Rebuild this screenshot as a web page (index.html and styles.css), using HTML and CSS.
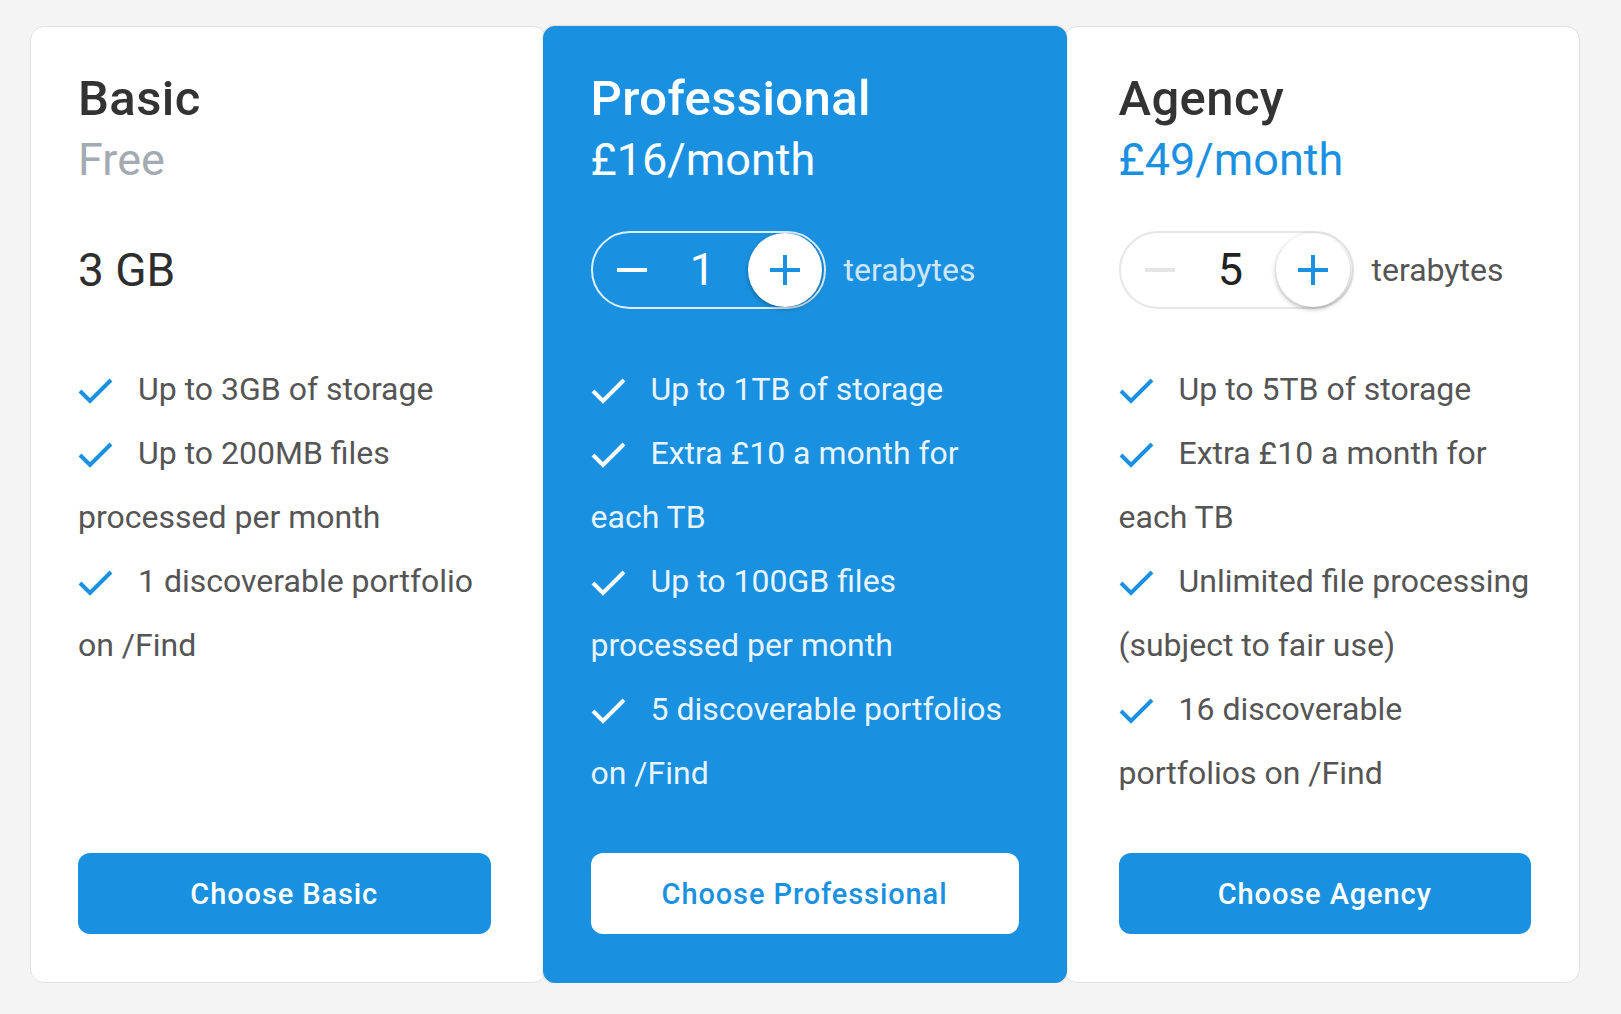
FILE: index.html
```html
<!DOCTYPE html>
<html lang="en">
<head>
<meta charset="utf-8">
<title>Plans</title>
<link rel="stylesheet" href="styles.css">
</head>
<body>
<div class="plans">
  <section class="card card-basic">
    <h2 class="title">Basic</h2>
    <div class="price price-free">Free</div>
    <div class="row"><span class="size">3 GB</span></div>
    <ul class="features">
      <li><svg class="check" viewBox="0 0 35 26"><polyline points="2,13 12,23 33,2"/></svg>Up to 3GB of storage</li>
      <li><svg class="check" viewBox="0 0 35 26"><polyline points="2,13 12,23 33,2"/></svg>Up to 200MB files processed per month</li>
      <li><svg class="check" viewBox="0 0 35 26"><polyline points="2,13 12,23 33,2"/></svg>1 discoverable portfolio on /Find</li>
    </ul>
    <button class="choose">Choose Basic</button>
  </section>

  <section class="card card-pro">
    <h2 class="title">Professional</h2>
    <div class="price">£16/month</div>
    <div class="row">
      <div class="stepper">
        <span class="minus"><span class="bar"></span></span>
        <span class="qty">1</span>
        <span class="plus"><span class="bar"></span><span class="bar bar-v"></span></span>
      </div>
      <span class="unit">terabytes</span>
    </div>
    <ul class="features">
      <li><svg class="check" viewBox="0 0 35 26"><polyline points="2,13 12,23 33,2"/></svg>Up to 1TB of storage</li>
      <li><svg class="check" viewBox="0 0 35 26"><polyline points="2,13 12,23 33,2"/></svg>Extra £10 a month for each TB</li>
      <li><svg class="check" viewBox="0 0 35 26"><polyline points="2,13 12,23 33,2"/></svg>Up to 100GB files processed per month</li>
      <li><svg class="check" viewBox="0 0 35 26"><polyline points="2,13 12,23 33,2"/></svg>5 discoverable portfolios on /Find</li>
    </ul>
    <button class="choose">Choose Professional</button>
  </section>

  <section class="card card-agency">
    <h2 class="title">Agency</h2>
    <div class="price price-blue">£49/month</div>
    <div class="row">
      <div class="stepper">
        <span class="minus minus-off"><span class="bar"></span></span>
        <span class="qty">5</span>
        <span class="plus"><span class="bar"></span><span class="bar bar-v"></span></span>
      </div>
      <span class="unit">terabytes</span>
    </div>
    <ul class="features">
      <li><svg class="check" viewBox="0 0 35 26"><polyline points="2,13 12,23 33,2"/></svg>Up to 5TB of storage</li>
      <li><svg class="check" viewBox="0 0 35 26"><polyline points="2,13 12,23 33,2"/></svg>Extra £10 a month for each TB</li>
      <li><svg class="check" viewBox="0 0 35 26"><polyline points="2,13 12,23 33,2"/></svg>Unlimited file processing (subject to fair use)</li>
      <li><svg class="check" viewBox="0 0 35 26"><polyline points="2,13 12,23 33,2"/></svg>16 discoverable portfolios on /Find</li>
    </ul>
    <button class="choose">Choose Agency</button>
  </section>
</div>
</body>
</html>
```

FILE: styles.css
```css
html, body {
  margin: 0;
  padding: 0;
  background: #f4f4f4;
  font-family: Roboto, "Liberation Sans", Arial, sans-serif;
}

.plans {
  display: flex;
  align-items: stretch;
  margin: 26px 0 0 30px;
  width: 1550px;
}

.card {
  flex: 1 1 0;
  display: flex;
  flex-direction: column;
  background: #fff;
  border: 1px solid #e2e2e2;
  border-radius: 14px;
  padding: 48px 48px 48px 47px;
  color: #555;
  min-width: 0;
}

.card-basic {
  padding-right: 55px;
}

.card-agency {
  padding-left: 55px;
}

.card-pro {
  flex: 0 0 524px;
  box-sizing: border-box;
  margin: 0 -4px;
  padding-left: 47px;
  padding-right: 47px;
  z-index: 1;
  background: #1a91e0;
  border-color: #1a91e0;
  border-radius: 12px;
  box-shadow: 0 0 2px rgba(0, 0, 0, 0.25);
  color: rgba(255, 255, 255, 0.92);
}

.title {
  margin: 0;
  font-size: 49px;
  line-height: 48px;
  font-weight: 500;
  color: #333;
  letter-spacing: 0.4px;
}

.card-pro .title {
  color: #fff;
}

.price {
  margin-top: 10px;
  font-size: 45px;
  line-height: 54px;
  font-weight: 400;
  color: #fff;
}

.price-free {
  color: #a3aab2;
}

.price-blue {
  color: #1a91e0;
}

.row {
  margin-top: 44px;
  height: 78px;
  display: flex;
  align-items: center;
}

.size {
  font-size: 46px;
  color: #2e2e2e;
}

.stepper {
  box-sizing: border-box;
  width: 235px;
  height: 78px;
  border: 2px solid #e6e6e6;
  border-radius: 39px;
  display: flex;
  align-items: center;
}

.card-pro .stepper {
  border-color: rgba(255, 255, 255, 0.85);
}

.minus {
  width: 78px;
  height: 74px;
  display: flex;
  align-items: center;
  justify-content: center;
}

.minus .bar {
  display: block;
  width: 30px;
  height: 4px;
  background: #fff;
}

.minus-off .bar {
  background: #e4e4e4;
}

.qty {
  width: 64px;
  text-align: center;
  font-size: 45px;
  line-height: 74px;
  color: #222;
}

.card-pro .qty {
  color: #fff;
}

.plus {
  margin-left: auto;
  margin-right: 2px;
  width: 74px;
  height: 74px;
  border-radius: 50%;
  background: #fff;
  box-shadow: 0 2px 5px rgba(0, 0, 0, 0.3);
  display: flex;
  align-items: center;
  justify-content: center;
  position: relative;
}

.plus .bar {
  display: block;
  width: 30px;
  height: 4px;
  background: #1a91e0;
}

.plus .bar-v {
  position: absolute;
  width: 4px;
  height: 30px;
}

.unit {
  margin-left: 18px;
  font-size: 32px;
  color: #555;
}

.card-pro .unit {
  color: rgba(255, 255, 255, 0.8);
}

.features {
  list-style: none;
  margin: 48px -8px 48px 0;
  padding: 0;
  font-size: 32px;
  line-height: 64px;
}

.check {
  display: inline-block;
  width: 35px;
  height: 26px;
  margin-right: 25px;
  vertical-align: -4px;
  fill: none;
  stroke: #1a91e0;
  stroke-width: 4;
}

.card-pro .check {
  stroke: #fff;
}

.choose {
  margin-top: auto;
  height: 81px;
  border: none;
  border-radius: 12px;
  background: #1a91e0;
  color: #fff;
  font-family: Roboto, "Liberation Sans", Arial, sans-serif;
  font-size: 29px;
  font-weight: 500;
  letter-spacing: 0.9px;
  cursor: pointer;
}

.card-pro .choose {
  background: #fff;
  color: #1a91e0;
}
```
